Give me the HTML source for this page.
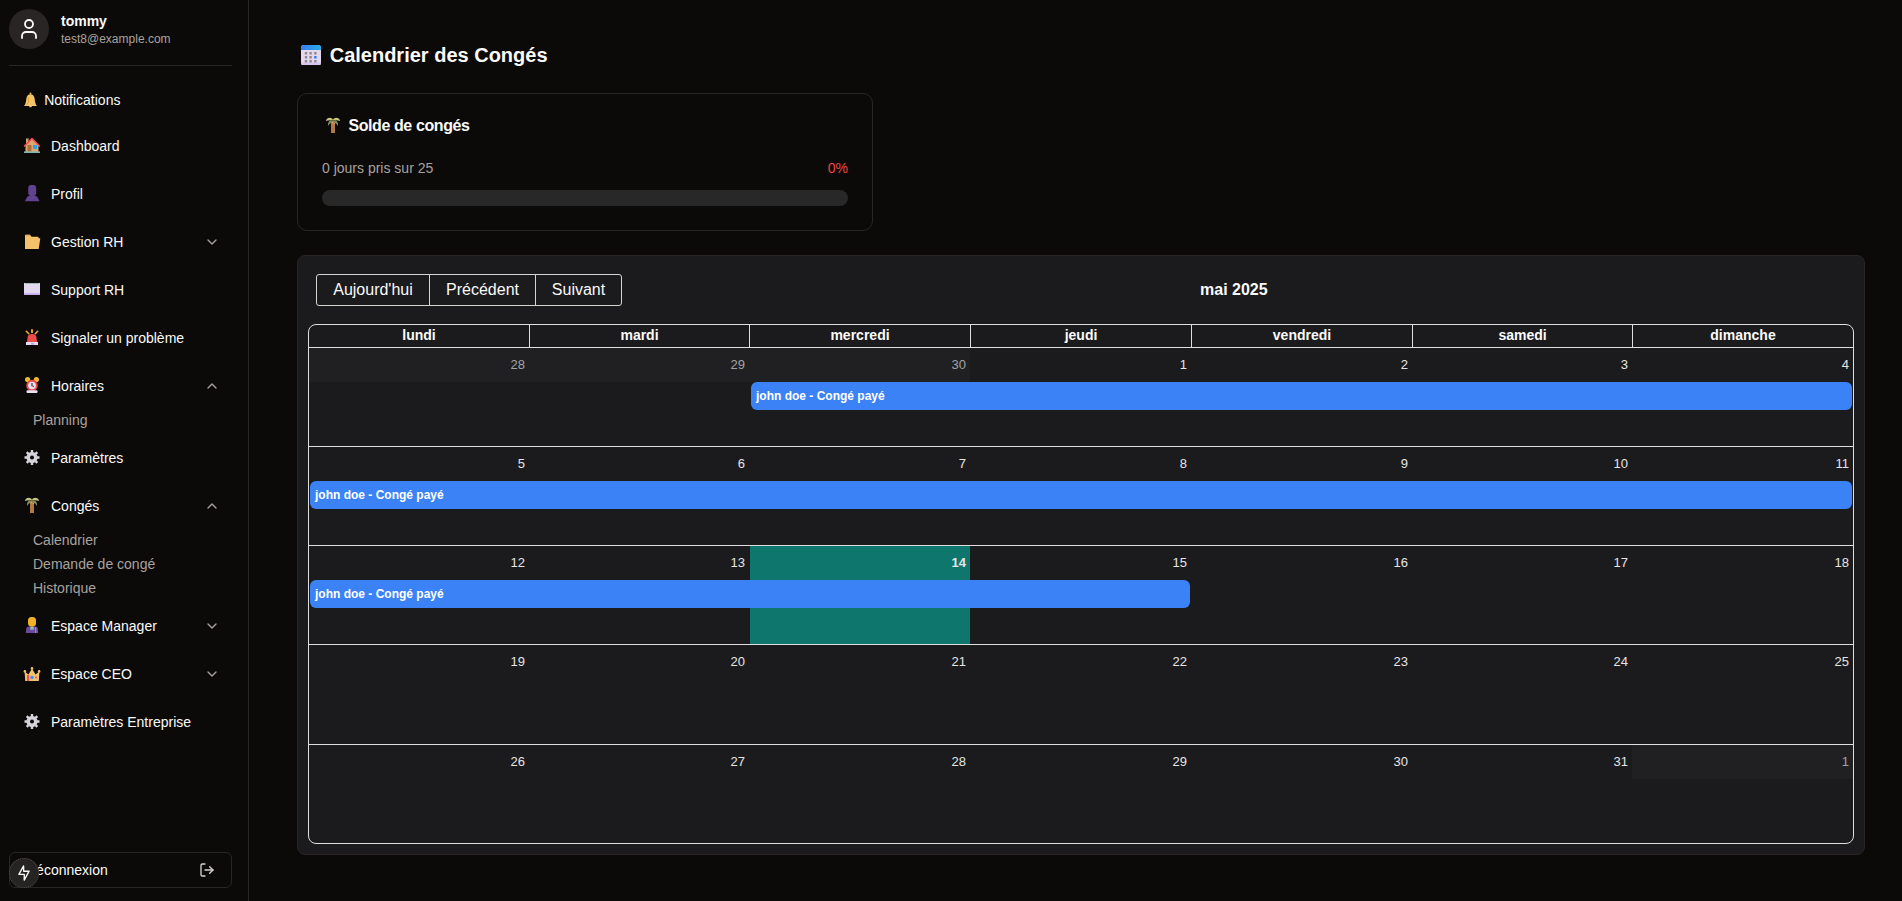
<!DOCTYPE html>
<html lang="fr">
<head>
<meta charset="utf-8">
<title>Calendrier des Congés</title>
<style>
*{margin:0;padding:0;box-sizing:border-box}
html,body{width:1902px;height:901px;overflow:hidden;background:#0c0a09;font-family:"Liberation Sans",sans-serif;color:#fafaf9}
.a{position:absolute}
.t{position:absolute;white-space:nowrap}
svg{display:block}
/* sidebar */
#side{position:absolute;left:0;top:0;width:249px;height:901px;border-right:1px solid #262626;background:#0c0a09}
.nav{font-size:14px;line-height:20px;color:#fafaf9}
.sub{font-size:14px;line-height:20px;color:#a8a29e}
/* main */
.card{position:absolute;border:1px solid #262626;border-radius:10px}
#cal{position:absolute;left:297px;top:255px;width:1568px;height:600px;background:#1b1b1e;border:1px solid #292524;border-radius:8px}
.btn{font-size:16px;line-height:30px;color:#fafaf9;text-align:center}
.hd{font-weight:bold;font-size:14px;line-height:22px;text-align:center;color:#fafaf9}
.num{font-size:13px;line-height:18px;text-align:right;color:#e7e5e4}
.oth{color:#a3a3a3}
.ev{position:absolute;height:28px;background:#3b82f6;border-radius:6px;color:#fff;font-weight:bold;font-size:12px;line-height:28px;padding-left:5px;white-space:nowrap;overflow:hidden}
.hl{position:absolute;height:1px;background:#dedede}
.vl{position:absolute;width:1px;background:#dedede}
</style>
</head>
<body>
<div id="side">
  <!-- avatar -->
  <div class="a" style="left:9px;top:9px;width:40px;height:40px;border-radius:50%;background:#292524"></div>
  <svg class="a" style="left:17px;top:17px" width="24" height="24" viewBox="0 0 24 24" fill="none" stroke="#fafaf9" stroke-width="1.8" stroke-linecap="round" stroke-linejoin="round"><circle cx="12" cy="7" r="4"/><path d="M19 21v-2a4 4 0 0 0-4-4H9a4 4 0 0 0-4 4v2"/></svg>
  <div class="t" style="left:61px;top:11px;font-weight:bold;font-size:14px;line-height:20px">tommy</div>
  <div class="t" style="left:61px;top:30.5px;font-size:12px;line-height:16px;color:#a8a29e">test8@example.com</div>
  <div class="a" style="left:9px;top:65px;width:223px;height:1px;background:#262626"></div>

  <!-- nav items -->
  <div class="t nav" style="left:44.2px;top:90px">Notifications</div>
  <div class="t nav" style="left:51px;top:136px">Dashboard</div>
  <div class="t nav" style="left:51px;top:184px">Profil</div>
  <div class="t nav" style="left:51px;top:232px">Gestion RH</div>
  <div class="t nav" style="left:51px;top:280px">Support RH</div>
  <div class="t nav" style="left:51px;top:328px">Signaler un problème</div>
  <div class="t nav" style="left:51px;top:376px">Horaires</div>
  <div class="t sub" style="left:33px;top:410px">Planning</div>
  <div class="t nav" style="left:51px;top:448px">Paramètres</div>
  <div class="t nav" style="left:51px;top:496px">Congés</div>
  <div class="t sub" style="left:33px;top:530px">Calendrier</div>
  <div class="t sub" style="left:33px;top:554px">Demande de congé</div>
  <div class="t sub" style="left:33px;top:578px">Historique</div>
  <div class="t nav" style="left:51px;top:616px">Espace Manager</div>
  <div class="t nav" style="left:51px;top:664px">Espace CEO</div>
  <div class="t nav" style="left:51px;top:712px">Paramètres Entreprise</div>

  <!-- chevrons -->
  <svg class="a" style="left:204px;top:234px" width="16" height="16" viewBox="0 0 24 24" fill="none" stroke="#a8a29e" stroke-width="2" stroke-linecap="round" stroke-linejoin="round"><path d="m6 9 6 6 6-6"/></svg>
  <svg class="a" style="left:204px;top:378px" width="16" height="16" viewBox="0 0 24 24" fill="none" stroke="#a8a29e" stroke-width="2" stroke-linecap="round" stroke-linejoin="round"><path d="m18 15-6-6-6 6"/></svg>
  <svg class="a" style="left:204px;top:498px" width="16" height="16" viewBox="0 0 24 24" fill="none" stroke="#a8a29e" stroke-width="2" stroke-linecap="round" stroke-linejoin="round"><path d="m18 15-6-6-6 6"/></svg>
  <svg class="a" style="left:204px;top:618px" width="16" height="16" viewBox="0 0 24 24" fill="none" stroke="#a8a29e" stroke-width="2" stroke-linecap="round" stroke-linejoin="round"><path d="m6 9 6 6 6-6"/></svg>
  <svg class="a" style="left:204px;top:666px" width="16" height="16" viewBox="0 0 24 24" fill="none" stroke="#a8a29e" stroke-width="2" stroke-linecap="round" stroke-linejoin="round"><path d="m6 9 6 6 6-6"/></svg>

  <!-- ICONS -->
<svg class="a" style="left:20px;top:88px" width="24" height="24" viewBox="0 0 24 24"><circle cx="10.5" cy="5.6" r="1" fill="#f0b040"/><path d="M4 18 C5.5 16.5 6 14 6.3 11 C6.6 8 8.2 6.3 10.5 6.3 C12.8 6.3 14.4 8 14.7 11 C15 14 15.5 16.5 17 18 Z" fill="#f5c36a"/><path d="M8.5 9 L8.3 14.5 L6.5 17" stroke="#e0a020" stroke-width="0.9" fill="none"/><rect x="9.2" y="17.6" width="2.6" height="1.6" rx="0.8" fill="#f5c890"/></svg>
<svg class="a" style="left:20px;top:134px" width="24" height="24" viewBox="0 0 24 24"><rect x="6" y="4.2" width="2.5" height="6" fill="#d9a066"/><rect x="6" y="4" width="2.5" height="1" fill="#5a5a5a"/><path d="M5.5 11 L12 5 L18.5 11 V18 H5.5 Z" fill="#dba870"/><path d="M4.6 12 L12 4.6 L19.4 12" stroke="#ef5056" stroke-width="1.7" fill="none" stroke-linecap="round" stroke-linejoin="round"/><rect x="7.5" y="11" width="4" height="6.5" fill="#a86e3a"/><rect x="13" y="11" width="4" height="4" fill="#2aa0f0"/><rect x="4" y="17.4" width="16" height="1.6" fill="#86b4b0"/></svg>
<svg class="a" style="left:20px;top:182px" width="24" height="24" viewBox="0 0 24 24"><rect x="8.2" y="3" width="8" height="11" rx="3" fill="#5f4290"/><rect x="10" y="12" width="4.5" height="3" fill="#5f4290"/><path d="M4.8 19.2 L7.5 14.6 Q8 14 9 14 L15.5 14 Q16.5 14 17 14.6 L19.6 19.2 Z" fill="#5f4290"/></svg>
<svg class="a" style="left:20px;top:230px" width="24" height="24" viewBox="0 0 24 24"><path d="M5 5.3 Q5 4.8 5.5 4.8 H10 L11.5 6.8 H18 Q18.5 6.8 18.5 7.3 V8.3 H20.3 L18.7 19 H5 Z" fill="#f5c26b"/><rect x="5.5" y="4.8" width="4.5" height="0.8" fill="#d9a050"/></svg>
<svg class="a" style="left:20px;top:278px" width="24" height="24" viewBox="0 0 24 24"><rect x="4" y="5" width="16" height="12" fill="#e4d8f0"/><rect x="4" y="15.3" width="16" height="1.7" fill="#c8a8f2"/><rect x="5" y="5" width="14" height="0.8" fill="#8fb0a8"/></svg>
<svg class="a" style="left:20px;top:326px" width="24" height="24" viewBox="0 0 24 24"><rect x="11" y="3" width="2" height="4.2" rx="1" fill="#e0a040"/><path d="M6.3 5.2 L8.8 7.8 M17.7 5.2 L15.2 7.8" stroke="#f0b040" stroke-width="1.5" stroke-linecap="round"/><path d="M7 16.3 L7.6 11 Q8.2 8 12 8 Q15.8 8 16.4 11 L17 16.3 Z" fill="#ee4b4b"/><rect x="6" y="16" width="12" height="3" fill="#e6dcf2"/><rect x="11" y="16.8" width="3" height="2" fill="#c0a0f0"/></svg>
<svg class="a" style="left:20px;top:374px" width="24" height="24" viewBox="0 0 24 24"><circle cx="7.6" cy="5.6" r="2.6" fill="#f0b830"/><circle cx="16.4" cy="5.6" r="2.6" fill="#f0b830"/><circle cx="12" cy="11.5" r="5.7" fill="#ee4848"/><circle cx="12" cy="11.5" r="3.8" fill="#ece4f4"/><path d="M12 9 V12.2" stroke="#333" stroke-width="1.2"/><circle cx="13.2" cy="12.4" r="0.8" fill="#e03030"/><rect x="6.5" y="16.2" width="11" height="2.8" rx="1" fill="#e8e0f0"/></svg>
<svg class="a" style="left:20px;top:446px" width="24" height="24" viewBox="0 0 24 24"><path d="M10.80 6.03 L10.81 3.99 L13.19 3.99 L13.20 6.03 L15.02 6.78 L16.47 5.35 L18.15 7.03 L16.72 8.48 L17.47 10.30 L19.51 10.31 L19.51 12.69 L17.47 12.70 L16.72 14.52 L18.15 15.97 L16.47 17.65 L15.02 16.22 L13.20 16.97 L13.19 19.01 L10.81 19.01 L10.80 16.97 L8.98 16.22 L7.53 17.65 L5.85 15.97 L7.28 14.52 L6.53 12.70 L4.49 12.69 L4.49 10.31 L6.53 10.30 L7.28 8.48 L5.85 7.03 L7.53 5.35 L8.98 6.78Z" fill="#d6d2da"/><circle cx="12" cy="11.5" r="2" fill="#0c0a09"/></svg>
<svg class="a" style="left:20px;top:494px" width="24" height="24" viewBox="0 0 24 24"><path d="M7 12 Q6.6 8 9 6.4 L15 6.4 Q17.4 8 17 12 Q15.5 9.4 14 8.9 L10 8.9 Q8.5 9.4 7 12 Z" fill="#7a9062"/><path d="M4.8 6.9 Q5.8 3.7 9 3.7 Q11.6 3.9 12.3 6.3 L10 6.3 Q7.5 6.1 4.8 6.9Z" fill="#c9c57f"/><path d="M19.2 6.9 Q18.2 3.7 15 3.7 Q12.4 3.9 11.7 6.3 L14 6.3 Q16.5 6.1 19.2 6.9Z" fill="#c9c57f"/><rect x="10" y="7.5" width="4" height="11.5" fill="#b07a45"/><circle cx="11.4" cy="8.6" r="0.8" fill="#e0a466"/><circle cx="13.3" cy="9.6" r="0.7" fill="#e0a466"/></svg>
<svg class="a" style="left:20px;top:614px" width="24" height="24" viewBox="0 0 24 24"><path d="M5.8 19 L6.3 14 Q6.8 12.5 9 12.5 L15 12.5 Q17.2 12.5 17.7 14 L18.2 19 Z" fill="#6b4a9b"/><rect x="10.3" y="12.5" width="3.4" height="3.2" fill="#8fc0b8"/><rect x="8" y="3" width="8" height="9.6" rx="3.5" fill="#f0b324"/><rect x="15" y="13" width="1.2" height="6" fill="#60a0d0"/></svg>
<svg class="a" style="left:20px;top:662px" width="24" height="24" viewBox="0 0 24 24"><path d="M5.2 19 L4.6 9.6 L8.5 12.6 L12 6.6 L15.5 12.6 L19.4 9.6 L18.8 19 Z" fill="#f0c06c"/><circle cx="4.9" cy="9.4" r="1.3" fill="#f0c06c"/><circle cx="12" cy="6.4" r="1.3" fill="#f0c06c"/><circle cx="19.1" cy="9.4" r="1.3" fill="#f0c06c"/><rect x="7" y="13" width="2.2" height="6" fill="#ee4b5b"/><circle cx="12" cy="15.5" r="1.7" fill="#3b8cf0"/><rect x="15.2" y="14.6" width="1.6" height="1.6" fill="#e84050"/></svg>
<svg class="a" style="left:20px;top:710px" width="24" height="24" viewBox="0 0 24 24"><path d="M10.80 6.03 L10.81 3.99 L13.19 3.99 L13.20 6.03 L15.02 6.78 L16.47 5.35 L18.15 7.03 L16.72 8.48 L17.47 10.30 L19.51 10.31 L19.51 12.69 L17.47 12.70 L16.72 14.52 L18.15 15.97 L16.47 17.65 L15.02 16.22 L13.20 16.97 L13.19 19.01 L10.81 19.01 L10.80 16.97 L8.98 16.22 L7.53 17.65 L5.85 15.97 L7.28 14.52 L6.53 12.70 L4.49 12.69 L4.49 10.31 L6.53 10.30 L7.28 8.48 L5.85 7.03 L7.53 5.35 L8.98 6.78Z" fill="#d6d2da"/><circle cx="12" cy="11.5" r="2" fill="#0c0a09"/></svg>

  <!-- logout -->
  <div class="a" style="left:9px;top:852px;width:223px;height:36px;border:1px solid #262626;border-radius:6px"></div>
  <div class="t nav" style="left:26px;top:860px">Déconnexion</div>
  <svg class="a" style="left:199px;top:862px" width="16" height="16" viewBox="0 0 24 24" fill="none" stroke="#d6d3d1" stroke-width="2" stroke-linecap="round" stroke-linejoin="round"><path d="M9 21H5a2 2 0 0 1-2-2V5a2 2 0 0 1 2-2h4"/><polyline points="16 17 21 12 16 7"/><line x1="21" y1="12" x2="9" y2="12"/></svg>
  <div class="a" style="left:9.3px;top:858px;width:29.5px;height:29.5px;border-radius:50%;background:#252423;border:1px dotted rgba(140,130,120,0.45)"></div>
  <svg class="a" style="left:6px;top:855px" width="36" height="36" viewBox="0 0 36 36" fill="none" stroke="#fafaf9" stroke-width="1.35" stroke-linejoin="round"><path d="M17.6 10.9 L12.9 19.4 H18.3 L18.2 25.1 L23.1 16.2 H17.7 Z"/></svg>
</div>

<!-- MAIN -->
<svg class="a" style="left:301px;top:45px" width="20" height="20" viewBox="0 0 20 20">
  <defs><linearGradient id="cg" x1="0" x2="1" y1="0" y2="0"><stop offset="0" stop-color="#3b7ff0"/><stop offset="1" stop-color="#25aee8"/></linearGradient></defs>
  <rect x="0" y="0" width="20" height="20" rx="3" fill="#e4d8ef"/>
  <rect x="0" y="17.5" width="20" height="2.5" rx="1.2" fill="#d9c6ee"/>
  <path d="M0 3a3 3 0 0 1 3-3h14a3 3 0 0 1 3 3v2H0z" fill="url(#cg)"/>
  <g fill="#8f8a8e"><rect x="3.8" y="7" width="2.4" height="2.5"/><rect x="8.4" y="7" width="2.4" height="2.5"/><rect x="13.2" y="7" width="2.4" height="2.5"/><rect x="3.8" y="11" width="2.4" height="2.5"/><rect x="8.4" y="11" width="2.4" height="2.5"/><rect x="3.8" y="15" width="2.4" height="2.5"/><rect x="8.4" y="15" width="2.4" height="2.5"/><rect x="13.2" y="15" width="2.4" height="2.5"/></g>
  <rect x="13.2" y="11" width="2.4" height="2.5" fill="#2f7df0"/>
</svg>
<div class="t" style="left:329.7px;top:40.5px;font-weight:bold;font-size:20px;line-height:28px">Calendrier des Congés</div>

<div class="card" style="left:297px;top:93px;width:576px;height:138px"></div>
<!-- palm icon card --><svg class="a" style="left:321px;top:114px" width="24" height="24" viewBox="0 0 24 24"><path d="M7 12 Q6.6 8 9 6.4 L15 6.4 Q17.4 8 17 12 Q15.5 9.4 14 8.9 L10 8.9 Q8.5 9.4 7 12 Z" fill="#7a9062"/><path d="M4.8 6.9 Q5.8 3.7 9 3.7 Q11.6 3.9 12.3 6.3 L10 6.3 Q7.5 6.1 4.8 6.9Z" fill="#c9c57f"/><path d="M19.2 6.9 Q18.2 3.7 15 3.7 Q12.4 3.9 11.7 6.3 L14 6.3 Q16.5 6.1 19.2 6.9Z" fill="#c9c57f"/><rect x="10" y="7.5" width="4" height="11.5" fill="#b07a45"/><circle cx="11.4" cy="8.6" r="0.8" fill="#e0a466"/><circle cx="13.3" cy="9.6" r="0.7" fill="#e0a466"/></svg>
<div class="t" style="left:348.4px;top:114.3px;font-weight:bold;font-size:16px;line-height:24px;letter-spacing:-0.4px">Solde de congés</div>
<div class="t" style="left:322px;top:158px;font-size:14px;line-height:20px;color:#a8a29e">0 jours pris sur 25</div>
<div class="t" style="left:800px;width:48px;text-align:right;top:158px;font-size:14px;line-height:20px;color:#ef4444">0%</div>
<div class="a" style="left:322px;top:190px;width:526px;height:16px;border-radius:8px;background:#282828"></div>

<div id="cal"></div>
<!-- toolbar -->
<div class="a" style="left:316px;top:274px;width:306px;height:32px;border:1px solid #d6d3d1;border-radius:3px"></div>
<div class="a" style="left:429px;top:275px;width:1px;height:30px;background:#d6d3d1"></div>
<div class="a" style="left:535px;top:275px;width:1px;height:30px;background:#d6d3d1"></div>
<div class="t btn" style="left:317px;top:275px;width:112px">Aujourd'hui</div>
<div class="t btn" style="left:430px;top:275px;width:105px">Précédent</div>
<div class="t btn" style="left:536px;top:275px;width:85px">Suivant</div>
<div class="t" style="left:1200px;top:277.5px;font-weight:bold;font-size:16px;line-height:24px">mai 2025</div>

<!-- grid -->
<div class="a" style="left:308px;top:324px;width:1546px;height:520px;border:1px solid #dedede;border-radius:8px"></div>
<div id="grid">
<div class="t hd" style="left:309px;top:324px;width:220px">lundi</div>
<div class="t hd" style="left:530px;top:324px;width:219px">mardi</div>
<div class="t hd" style="left:750px;top:324px;width:220px">mercredi</div>
<div class="t hd" style="left:971px;top:324px;width:220px">jeudi</div>
<div class="t hd" style="left:1192px;top:324px;width:220px">vendredi</div>
<div class="t hd" style="left:1413px;top:324px;width:219px">samedi</div>
<div class="t hd" style="left:1633px;top:324px;width:220px">dimanche</div>
<div class="vl" style="left:529px;top:325px;height:22px"></div>
<div class="vl" style="left:749px;top:325px;height:22px"></div>
<div class="vl" style="left:970px;top:325px;height:22px"></div>
<div class="vl" style="left:1191px;top:325px;height:22px"></div>
<div class="vl" style="left:1412px;top:325px;height:22px"></div>
<div class="vl" style="left:1632px;top:325px;height:22px"></div>
<div class="hl" style="left:309px;top:347px;width:1544px"></div>
<div class="hl" style="left:309px;top:446px;width:1544px"></div>
<div class="hl" style="left:309px;top:545px;width:1544px"></div>
<div class="hl" style="left:309px;top:644px;width:1544px"></div>
<div class="hl" style="left:309px;top:744px;width:1544px"></div>
<div class="a" style="left:309px;top:348px;width:661px;height:34px;background:#202023"></div>
<div class="a" style="left:1632px;top:745px;width:221px;height:34px;background:#202023"></div>
<div class="a" style="left:750px;top:546px;width:220px;height:98px;background:#0f766e"></div>
<div class="t num oth" style="left:465px;width:60px;top:355.5px">28</div>
<div class="t num oth" style="left:685px;width:60px;top:355.5px">29</div>
<div class="t num oth" style="left:906px;width:60px;top:355.5px">30</div>
<div class="t num" style="left:1127px;width:60px;top:355.5px">1</div>
<div class="t num" style="left:1348px;width:60px;top:355.5px">2</div>
<div class="t num" style="left:1568px;width:60px;top:355.5px">3</div>
<div class="t num" style="left:1789px;width:60px;top:355.5px">4</div>
<div class="t num" style="left:465px;width:60px;top:454.5px">5</div>
<div class="t num" style="left:685px;width:60px;top:454.5px">6</div>
<div class="t num" style="left:906px;width:60px;top:454.5px">7</div>
<div class="t num" style="left:1127px;width:60px;top:454.5px">8</div>
<div class="t num" style="left:1348px;width:60px;top:454.5px">9</div>
<div class="t num" style="left:1568px;width:60px;top:454.5px">10</div>
<div class="t num" style="left:1789px;width:60px;top:454.5px">11</div>
<div class="t num" style="left:465px;width:60px;top:553.5px">12</div>
<div class="t num" style="left:685px;width:60px;top:553.5px">13</div>
<div class="t num" style="left:906px;width:60px;top:553.5px;font-weight:bold">14</div>
<div class="t num" style="left:1127px;width:60px;top:553.5px">15</div>
<div class="t num" style="left:1348px;width:60px;top:553.5px">16</div>
<div class="t num" style="left:1568px;width:60px;top:553.5px">17</div>
<div class="t num" style="left:1789px;width:60px;top:553.5px">18</div>
<div class="t num" style="left:465px;width:60px;top:652.5px">19</div>
<div class="t num" style="left:685px;width:60px;top:652.5px">20</div>
<div class="t num" style="left:906px;width:60px;top:652.5px">21</div>
<div class="t num" style="left:1127px;width:60px;top:652.5px">22</div>
<div class="t num" style="left:1348px;width:60px;top:652.5px">23</div>
<div class="t num" style="left:1568px;width:60px;top:652.5px">24</div>
<div class="t num" style="left:1789px;width:60px;top:652.5px">25</div>
<div class="t num" style="left:465px;width:60px;top:752.5px">26</div>
<div class="t num" style="left:685px;width:60px;top:752.5px">27</div>
<div class="t num" style="left:906px;width:60px;top:752.5px">28</div>
<div class="t num" style="left:1127px;width:60px;top:752.5px">29</div>
<div class="t num" style="left:1348px;width:60px;top:752.5px">30</div>
<div class="t num" style="left:1568px;width:60px;top:752.5px">31</div>
<div class="t num oth" style="left:1789px;width:60px;top:752.5px">1</div>
<div class="ev" style="left:751px;top:382px;width:1101px">john doe - Congé payé</div>
<div class="ev" style="left:310px;top:481px;width:1542px">john doe - Congé payé</div>
<div class="ev" style="left:310px;top:580px;width:880px">john doe - Congé payé</div>
</div>
</body>
</html>
